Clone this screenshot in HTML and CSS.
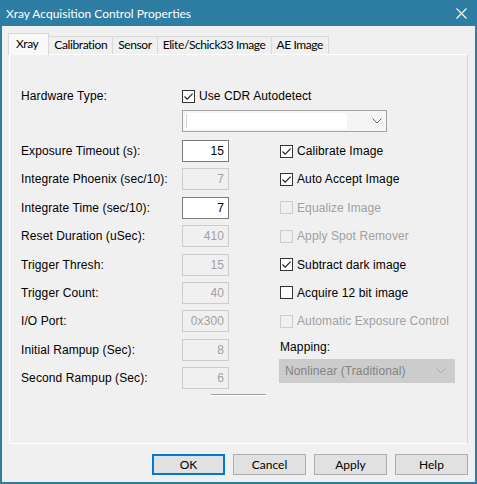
FILE: index.html
```html
<!DOCTYPE html>
<html lang="en">
<head>
    <meta charset="UTF-8">
    <title>Xray Acquisition Control Properties</title>
    <link rel="stylesheet" href="styles.css">
</head>
<body>
    <div class="window">
        <header class="titlebar">
            <span class="title">Xray Acquisition Control Properties</span>
            <span class="close">
                <svg width="11" height="11" viewBox="0 0 11 11"><path d="M0.5 0.5 L10.5 10.5 M10.5 0.5 L0.5 10.5" stroke="#fff" stroke-width="1.1" fill="none"/></svg>
            </span>
        </header>

        <div class="body">
            <div class="tabs">
                <div class="tab active">Xray</div>
                <div class="tab">Calibration</div>
                <div class="tab">Sensor</div>
                <div class="tab">Elite/Schick33 Image</div>
                <div class="tab">AE Image</div>
            </div>

            <div class="panel">
                <div class="hw-row">
                    <span class="label">Hardware Type:</span>
                    <label class="check">
                        <span class="box"><svg width="11" height="11" viewBox="0 0 11 11"><polyline points="1.5,5.5 4.2,8.2 9.6,2.6" stroke="#222" stroke-width="1.2" fill="none"/></svg></span>
                        Use CDR Autodetect
                    </label>
                </div>
                <div class="combo hw-combo">
                    <span class="combo-value"><span class="caret"></span></span>
                    <svg class="chevron" width="10" height="6" viewBox="0 0 10 6"><polyline points="0.5,0.5 5,5 9.5,0.5" stroke="#666" fill="none"/></svg>
                </div>

                <div class="columns">
                    <div class="fields">
                        <div class="field"><span class="label">Exposure Timeout (s):</span><span class="edit">15</span></div>
                        <div class="field"><span class="label">Integrate Phoenix (sec/10):</span><span class="edit disabled">7</span></div>
                        <div class="field"><span class="label">Integrate Time (sec/10):</span><span class="edit">7</span></div>
                        <div class="field"><span class="label">Reset Duration (uSec):</span><span class="edit disabled">410</span></div>
                        <div class="field"><span class="label">Trigger Thresh:</span><span class="edit disabled">15</span></div>
                        <div class="field"><span class="label">Trigger Count:</span><span class="edit disabled">40</span></div>
                        <div class="field"><span class="label">I/O Port:</span><span class="edit disabled">0x300</span></div>
                        <div class="field"><span class="label">Initial Rampup (Sec):</span><span class="edit disabled">8</span></div>
                        <div class="field"><span class="label">Second Rampup (Sec):</span><span class="edit disabled">6</span></div>
                        <div class="separator"></div>
                    </div>

                    <div class="options">
                        <label class="check">
                            <span class="box"><svg width="11" height="11" viewBox="0 0 11 11"><polyline points="1.5,5.5 4.2,8.2 9.6,2.6" stroke="#222" stroke-width="1.2" fill="none"/></svg></span>
                            Calibrate Image
                        </label>
                        <label class="check">
                            <span class="box"><svg width="11" height="11" viewBox="0 0 11 11"><polyline points="1.5,5.5 4.2,8.2 9.6,2.6" stroke="#222" stroke-width="1.2" fill="none"/></svg></span>
                            Auto Accept Image
                        </label>
                        <label class="check disabled"><span class="box"></span>Equalize Image</label>
                        <label class="check disabled"><span class="box"></span>Apply Spot Remover</label>
                        <label class="check">
                            <span class="box"><svg width="11" height="11" viewBox="0 0 11 11"><polyline points="1.5,5.5 4.2,8.2 9.6,2.6" stroke="#222" stroke-width="1.2" fill="none"/></svg></span>
                            Subtract dark image
                        </label>
                        <label class="check"><span class="box"></span>Acquire 12 bit image</label>
                        <label class="check disabled"><span class="box"></span>Automatic Exposure Control</label>
                        <div class="mapping">
                            <span class="label">Mapping:</span>
                            <div class="combo disabled">
                                <span>Nonlinear (Traditional)</span>
                                <svg class="chevron" width="10" height="6" viewBox="0 0 10 6"><polyline points="0.5,0.5 5,5 9.5,0.5" stroke="#aaa" fill="none"/></svg>
                            </div>
                        </div>
                    </div>
                </div>
            </div>

            <div class="buttons">
                <button class="default">OK</button>
                <button>Cancel</button>
                <button>Apply</button>
                <button>Help</button>
            </div>
        </div>
    </div>
</body>
</html>
```

FILE: styles.css
```css
:root {
    --title-color: #2e7da3;
    --face-color: #f0f0f0;
    --edit-border: #7a7a7a;
    --disabled-text: #a0a0a0;
    --disabled-border: #cccccc;
    --ui-font: "Segoe UI", Lato, sans-serif;
    --dlg-font: "Liberation Sans", Arial, sans-serif;
}

* {
    margin: 0;
    padding: 0;
    box-sizing: border-box;
}

body {
    width: 477px;
    height: 484px;
    overflow: hidden;
}

.window {
    height: 484px;
    display: flex;
    flex-direction: column;
    border: 2px solid var(--title-color);
    border-top: none;
    background: var(--face-color);
}

.titlebar {
    height: 26px;
    margin: 0 -2px;
    padding: 0 10px 0 6px;
    display: flex;
    align-items: center;
    justify-content: space-between;
    background: var(--title-color);
    color: white;
    font-family: var(--ui-font);
    font-size: 12px;
}

.close {
    display: flex;
    margin-top: 1px;
}

.body {
    flex: 1;
    display: flex;
    flex-direction: column;
    padding: 7px 7px 7px;
    font-family: var(--ui-font);
    font-size: 12px;
    color: #000;
}

/* tab strip */
.tabs {
    display: flex;
    height: 21px;
    position: relative;
    z-index: 1;
    letter-spacing: -0.4px;
}

.tab {
    margin-top: 3px;
    height: 18px;
    padding: 0 5px;
    line-height: 16px;
    border: 1px solid #d9d9d9;
    border-bottom: none;
    border-left: none;
    background: var(--face-color);
}

.tab.active {
    margin-top: 0;
    margin-left: -1px;
    height: 22px;
    padding: 0 10px 0 7px;
    line-height: 19px;
    border-left: 1px solid #d9d9d9;
    background: #f9f9f9;
}

/* property page */
.panel {
    flex: 1;
    padding: 33px 11px 0;
    border: 1px solid #fff;
    border-right-color: #d5d5d5;
    font-family: var(--dlg-font);
    letter-spacing: 0.1px;
}

.label {
    white-space: nowrap;
}

.hw-row {
    display: flex;
    align-items: center;
    height: 16px;
}

.hw-row .label {
    width: 161px;
}

.check {
    display: flex;
    align-items: center;
    gap: 4px;
    height: 22px;
    white-space: nowrap;
}

.hw-row .check {
    height: 16px;
}

.box {
    width: 13px;
    height: 13px;
    flex: none;
    display: flex;
    align-items: center;
    justify-content: center;
    border: 1px solid #333;
    background: #fff;
}

.check.disabled {
    color: var(--disabled-text);
}

.check.disabled .box {
    border-color: var(--disabled-border);
    background: var(--face-color);
}

.combo {
    display: flex;
    align-items: center;
    justify-content: space-between;
    border: 1px solid #a2a2a2;
    background: #f5f5f5;
}

.hw-combo {
    margin: 6px 0 0 161px;
    width: 205px;
    height: 22px;
    padding-right: 4px;
}

.combo-value {
    align-self: stretch;
    width: 162px;
    margin: 2px 0 2px 2px;
    background: #fff;
    display: flex;
    align-items: center;
}

.caret {
    width: 1px;
    height: 14px;
    margin-left: 1px;
    background: #d0d0d0;
}

.columns {
    display: flex;
    gap: 51px;
    margin-top: 8px;
}

.fields,
.options {
    display: flex;
    flex-direction: column;
    gap: 6.4px;
}

.fields {
    width: 208px;
    flex: none;
}

.field {
    display: flex;
    align-items: center;
    height: 22px;
}

.field .label {
    width: 161px;
}

.edit {
    width: 47px;
    height: 22px;
    padding-right: 4px;
    line-height: 20px;
    text-align: right;
    border: 1px solid var(--edit-border);
    background: #fff;
}

.edit.disabled {
    color: var(--disabled-text);
    border-color: var(--disabled-border);
    background: var(--face-color);
}

.separator {
    width: 55px;
    height: 2px;
    margin: -1.4px 0 0 190px;
    border-top: 1px solid #a0a0a0;
    border-bottom: 1px solid #fff;
}

.mapping .label {
    display: block;
    line-height: 16px;
}

.combo.disabled {
    width: 176px;
    height: 24px;
    margin: 4px 0 0 -1px;
    padding: 0 8px 0 5px;
    border-color: #cccccc;
    background: #cccccc;
    color: #838383;
}

/* dialog buttons */
.buttons {
    display: flex;
    justify-content: flex-end;
    gap: 8px;
    margin-top: 10px;
}

button {
    width: 73px;
    height: 21px;
    font-family: var(--ui-font);
    font-size: 12px;
    color: #000;
    background: #e1e1e1;
    border: 1px solid #adadad;
}

button.default {
    border: 2px solid #0078d7;
}
```
